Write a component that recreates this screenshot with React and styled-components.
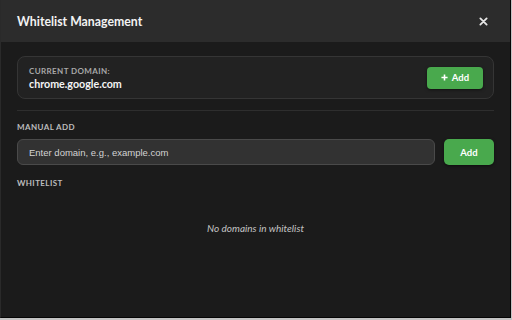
import styled, { createGlobalStyle } from "styled-components";

const GlobalStyle = createGlobalStyle`
  html, body {
    margin: 0;
    padding: 0;
    background: #c4c4c4;
  }
  body {
    font-family: Lato, "Noto Sans", sans-serif;
  }
`;

const Modal = styled.div`
  width: 509px;
  height: 317px;
  background: #1b1b1b;
  border-left: 1px solid #2a2a2a;
  border-right: 1px solid #050505;
  border-bottom: 1px solid #050505;
  display: flex;
  flex-direction: column;
`;

const Header = styled.div`
  height: 42px;
  background: #2c2c2c;
  display: flex;
  align-items: center;
  justify-content: space-between;
  padding: 0 22px 0 16px;
`;

const Title = styled.h3`
  margin: 0;
  font-size: 12.3px;
  font-weight: 700;
  color: #f2f2f2;
`;

const Close = styled.button`
  border: none;
  background: none;
  padding: 0;
  color: #e6e6e6;
  cursor: pointer;
  display: flex;
`;

const Body = styled.div`
  padding: 14px 16px;
  display: flex;
  flex-direction: column;
`;

const DomainCard = styled.div`
  height: 41px;
  border: 1px solid #353535;
  border-radius: 8px;
  background: #222222;
  display: flex;
  align-items: center;
  justify-content: space-between;
  padding: 0 10px 0 11px;
`;

const Label = styled.div`
  font-size: 8px;
  font-weight: 700;
  letter-spacing: 0.4px;
  text-transform: uppercase;
  color: ${(p) => (p.muted ? "#a8a8a8" : "#bdbdbd")};
`;

const Domain = styled.div`
  margin-top: 1px;
  font-size: 10.7px;
  font-weight: 700;
  color: #f5f5f5;
`;

const Button = styled.button`
  background: #49a94d;
  border: none;
  border-radius: ${(p) => (p.small ? "4px" : "5px")};
  color: #fff;
  font-family: inherit;
  font-size: 9.5px;
  font-weight: 700;
  height: ${(p) => (p.small ? "22px" : "26px")};
  width: ${(p) => (p.small ? "56px" : "50px")};
  display: flex;
  align-items: center;
  justify-content: center;
  gap: 4px;
  box-shadow: 0 1px 3px rgba(0, 0, 0, 0.5);
  cursor: pointer;
`;

const Divider = styled.div`
  height: 1px;
  background: #2e2e2e;
  margin: 11px 0 11px;
`;

const Section = styled.div`
  margin-bottom: 7px;
`;

const Row = styled.div`
  display: flex;
  gap: 9px;
  margin-bottom: 13px;
`;

const Input = styled.input`
  flex: 1;
  height: 26px;
  box-sizing: border-box;
  background: #323232;
  border: 1px solid #4a4a4a;
  border-radius: 6px;
  padding: 0 11px;
  font-family: "Liberation Sans", Arial, sans-serif;
  font-size: 9.5px;
  color: #eee;
  outline: none;
  &::placeholder {
    color: #d2d2d2;
  }
`;

const Empty = styled.div`
  text-align: center;
  font-style: italic;
  font-size: 10px;
  color: #c4c4c4;
  margin-top: 34px;
`;

const App = () => {
  return (
    <>
      <GlobalStyle />
      <Modal>
        <Header>
          <Title>Whitelist Management</Title>
          <Close>
            <svg width="9" height="9" viewBox="0 0 10 10">
              <path
                d="M1.5 1.5 L8.5 8.5 M8.5 1.5 L1.5 8.5"
                stroke="currentColor"
                strokeWidth="2"
                strokeLinecap="round"
              />
            </svg>
          </Close>
        </Header>
        <Body>
          <DomainCard>
            <div>
              <Label muted>Current Domain:</Label>
              <Domain>chrome.google.com</Domain>
            </div>
            <Button small>
              <svg width="7" height="7" viewBox="0 0 8 8">
                <path
                  d="M4 0.5 V7.5 M0.5 4 H7.5"
                  stroke="currentColor"
                  strokeWidth="1.8"
                />
              </svg>
              Add
            </Button>
          </DomainCard>
          <Divider />
          <Section>
            <Label>Manual Add</Label>
          </Section>
          <Row>
            <Input placeholder="Enter domain, e.g., example.com" />
            <Button>Add</Button>
          </Row>
          <Label>Whitelist</Label>
          <Empty>No domains in whitelist</Empty>
        </Body>
      </Modal>
    </>
  );
};

export default App;
